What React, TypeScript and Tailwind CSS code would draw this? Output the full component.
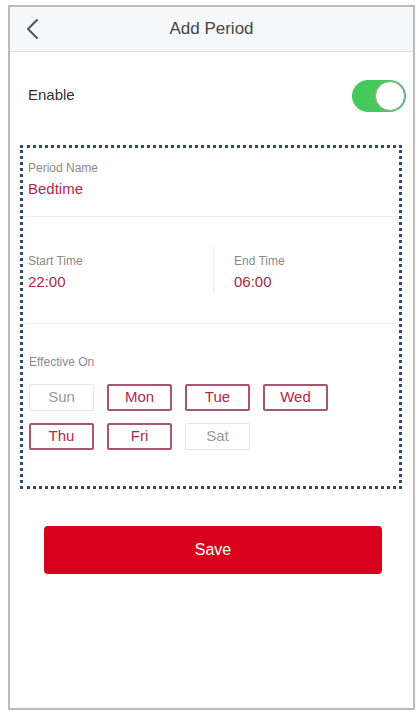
import React from "react";

const days = [
  { d: "Sun", on: false },
  { d: "Mon", on: true },
  { d: "Tue", on: true },
  { d: "Wed", on: true },
  { d: "Thu", on: true },
  { d: "Fri", on: true },
  { d: "Sat", on: false },
];

export default function App() {
  return (
    <div
      className="w-[420px] h-[712px] bg-white pt-[5px] pl-[8px]"
      style={{ fontFamily: '"Liberation Sans", Arial, sans-serif' }}
    >
      <div className="w-[407px] h-[705px] border-2 border-[#bcbcbc] bg-white flex flex-col">
        {/* header */}
        <div className="h-[45px] bg-[#f7f8fa] border-b border-[#dedede] flex items-center relative">
          <svg
            className="absolute left-[15px] top-[11px]"
            width="16"
            height="22"
            viewBox="0 0 16 22"
            fill="none"
          >
            <path d="M12 2 L3 11 L12 20" stroke="#555" strokeWidth="2" strokeLinecap="round" strokeLinejoin="round" />
          </svg>
          <div className="w-full text-center text-[17px] text-[#444]">Add Period</div>
        </div>

        {/* enable row */}
        <div className="h-[93px] pb-[6px] flex items-center justify-between pl-[18px] pr-[7px]">
          <span className="text-[15px] text-[#333]">Enable</span>
          <div className="w-[54px] h-[32px] rounded-full bg-[#45c95a] relative">
            <div className="absolute right-[1px] top-[1px] w-[30px] h-[30px] rounded-full bg-white border border-[#9a9a9a]" />
          </div>
        </div>

        {/* dotted form box */}
        <div className="ml-[10px] w-[382px] border-[3px] border-dotted border-[#2e4d6e]">
          <div className="h-[69px] border-b border-[#f0f0f0] pl-[5px] pt-[13px]">
            <div className="text-[12px] text-[#8a8a8a] leading-[15px]">Period Name</div>
            <div className="text-[15px] text-[#b3284a] leading-[20px] mt-[3px]">Bedtime</div>
          </div>

          <div className="h-[107px] border-b border-[#f0f0f0] flex items-center">
            <div className="w-[190px] pl-[5px] pt-[6px]">
              <div className="text-[12px] text-[#8a8a8a] leading-[15px]">Start Time</div>
              <div className="text-[15px] text-[#b3284a] leading-[20px] mt-[3px]">22:00</div>
            </div>
            <div className="w-px h-[46px] bg-[#ececec]" />
            <div className="flex-1 pl-[20px] pt-[6px]">
              <div className="text-[12px] text-[#8a8a8a] leading-[15px]">End Time</div>
              <div className="text-[15px] text-[#9c2a4a] leading-[20px] mt-[3px]">06:00</div>
            </div>
          </div>

          <div className="h-[162px] pl-[6px] pt-[31px]">
            <div className="text-[12px] text-[#8a8a8a] leading-[15px]">Effective On</div>
            <div className="mt-[14px] grid grid-cols-[65px_65px_65px_65px] gap-x-[13px] gap-y-[12px]">
              {days.map((x) => (
                <div
                  key={x.d}
                  className={
                    x.on
                      ? "h-[27px] border-2 border-[#a9556c] rounded-[2px] flex items-center justify-center text-[15px] text-[#b3284a]"
                      : "h-[27px] border border-[#e6e6e6] rounded-[2px] flex items-center justify-center text-[15px] text-[#999]"
                  }
                >
                  {x.d}
                </div>
              ))}
            </div>
          </div>
        </div>

        {/* save */}
        <div className="mt-[37px] pl-[34px]">
          <button className="w-[338px] h-[48px] rounded-[4px] bg-[#d9001b] text-white text-[16px]">
            Save
          </button>
        </div>
      </div>
    </div>
  );
}
